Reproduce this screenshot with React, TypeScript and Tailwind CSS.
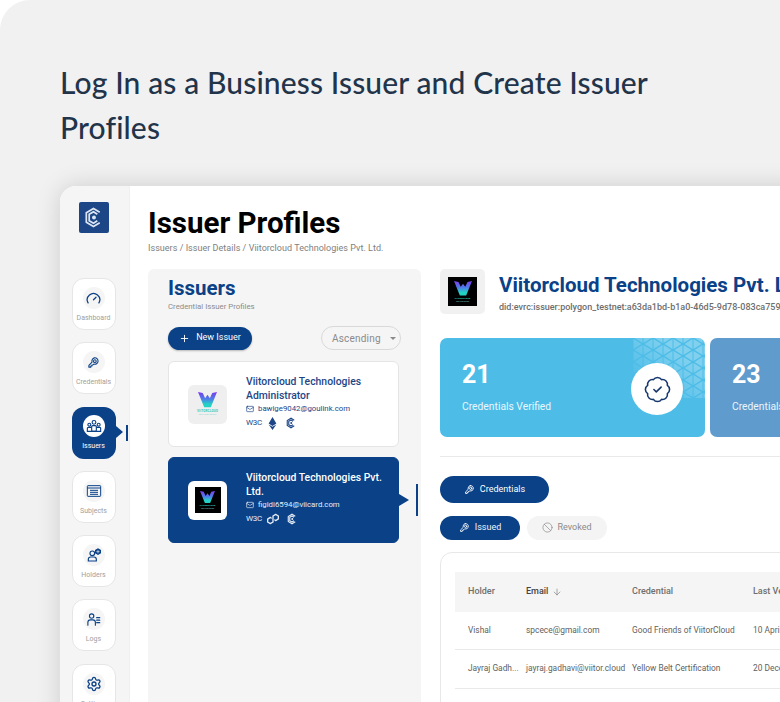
import { ArrowDown, Ban, BadgeCheck, Gauge, Mail, Plus, Settings } from 'lucide-react';
import { FaEthereum } from 'react-icons/fa';
import { SiPolygon } from 'react-icons/si';
import type { ReactNode } from 'react';

const ROBOTO = "font-['Roboto',sans-serif]";

function CredIcon({ className }: { className?: string }) {
  return (
    <svg viewBox="0 0 24 24" fill="none" stroke="currentColor" strokeWidth="2" strokeLinejoin="round" strokeLinecap="round" className={className}>
      <path d="M13.5 3.5c3.7-.8 7.4 2.7 6.9 6.6-.5 3.600-4.200 5.900-7.700 4.800l-1.700 1.700h-2v2H7v2H3.500v-3.400l5.800-5.700c-1-3.300.9-7.200 4.200-8z" />
      <circle cx="14.500" cy="9.500" r="2.500" />
    </svg>
  );
}

function SubjectsIcon({ className }: { className?: string }) {
  return (
    <svg viewBox="0 0 24 24" fill="none" stroke="currentColor" strokeWidth="1.500" className={className}>
      <rect x="2" y="4" width="20" height="16" rx="1" />
      <path d="M2 7.500h20M6 11h12M6 14h12M6 17h12" />
    </svg>
  );
}

function HoldersIcon({ className }: { className?: string }) {
  return (
    <svg viewBox="0 0 24 24" fill="none" stroke="currentColor" strokeWidth="1.800" className={className}>
      <circle cx="9.500" cy="9.500" r="3.500" />
      <path d="M3.500 21v-2.500c0-2 1.500-3.500 3.500-3.500h5c2 0 3.500 1.500 3.500 3.500V21z" />
      <path fill="currentColor" stroke="none" d="M18 2l4.500 2.500v5L18 12l-4.500-2.500v-5z" />
      <path stroke="#f5f5f5" strokeWidth="1" d="M18 4.500v5M15.500 7h5" />
    </svg>
  );
}

function LogsIcon({ className }: { className?: string }) {
  return (
    <svg viewBox="0 0 24 24" fill="none" stroke="currentColor" strokeWidth="1.800" strokeLinecap="round" className={className}>
      <circle cx="9" cy="6.500" r="3.500" />
      <path d="M3 21v-4.500C3 14 5 12.500 7 12.500h4c2 0 4 1.500 4 4V21" />
      <path d="M17 9h5M17 13h5M17 17h5" />
    </svg>
  );
}

function IssuersIcon({ className }: { className?: string }) {
  return (
    <svg viewBox="0 0 24 24" fill="none" stroke="currentColor" strokeWidth="1.700" className={className}>
      <circle cx="12" cy="6.500" r="2.800" />
      <circle cx="5" cy="10" r="2.200" />
      <circle cx="19" cy="10" r="2.200" />
      <rect x="8.500" y="11.500" width="7" height="8.500" rx="1.500" />
      <path d="M8.500 14H3.500C2.500 14 2 14.800 2 15.800V20h20v-4.200c0-1-.5-1.800-1.500-1.800h-5" />
    </svg>
  );
}

function BrandMark({ className, strokeWidth = 1.800 }: { className?: string; strokeWidth?: number }) {
  return (
    <svg viewBox="0 0 24 24" fill="none" stroke="currentColor" strokeWidth={strokeWidth} className={className}>
      <path d="M18.500 6.500L12 2.500 4.500 7v10l7.500 4.500 6.500-4" />
      <path d="M16 8.500L12 6 7.500 8.700v6.600L12 18l4-2.500" />
      <circle cx="12.500" cy="12" r="2" fill="currentColor" stroke="none" />
    </svg>
  );
}

function ViitorLogo({ width, tiny }: { width: number; tiny?: boolean }) {
  return (
    <div className="flex flex-col items-center">
      <svg viewBox="0 0 40 32" style={{ width }}>
        <defs>
          <linearGradient id="vg" x1="0" y1="0" x2="0" y2="1">
            <stop offset="0" stopColor="#7c3aed" />
            <stop offset="0.45" stopColor="#4f7be8" />
            <stop offset="0.8" stopColor="#22d3c5" />
          </linearGradient>
        </defs>
        <path fill="url(#vg)" d="M0 0l10 2 5 11 5-7 5 7 5-11 10-2-13 32h-14z" />
      </svg>
      <span className={`mt-[1px] font-bold whitespace-nowrap text-[#2fc9bb] ${tiny ? 'text-[2.500px] leading-[3px]' : 'text-[3px] leading-[4px] tracking-[0.2px]'}`}>
        VIITORCLOUD
      </span>
      <span className={`whitespace-nowrap text-[#7fcfc6] ${tiny ? 'text-[1.800px] leading-[2px]' : 'text-[2px] leading-[3px] tracking-[0.3px]'}`}>
        TECHNOLOGIES
      </span>
    </div>
  );
}

interface NavItem {
  label: string;
  icon: ReactNode;
  active?: boolean;
}

const NAV: NavItem[] = [
  { label: 'Dashboard', icon: <Gauge className="w-[15px] h-[15px]" /> },
  { label: 'Credentials', icon: <CredIcon className="w-[13px] h-[13px]" /> },
  { label: 'Issuers', icon: <IssuersIcon className="w-[16px] h-[16px]" />, active: true },
  { label: 'Subjects', icon: <SubjectsIcon className="w-[16px] h-[16px]" /> },
  { label: 'Holders', icon: <HoldersIcon className="w-[16px] h-[16px]" /> },
  { label: 'Logs', icon: <LogsIcon className="w-[15px] h-[15px]" /> },
  { label: 'Settings', icon: <Settings className="w-[16px] h-[16px]" /> },
];

function Sidebar() {
  return (
    <aside className="w-[70px] shrink-0 bg-[#f5f5f5] flex flex-col items-center pt-4 pr-[2px] border-r border-[#f0f0f0]">
      <div className="w-[30px] h-[31px] rounded-[2px] bg-[#1d4687] flex items-center justify-center text-[#dbe4f2]">
        <BrandMark className="w-[23px] h-[23px]" />
      </div>
      <div className="mt-[45px] flex flex-col gap-[12.300px]">
        {NAV.map((item) => (
          <div
            key={item.label}
            className={`relative w-[44px] h-[52px] rounded-[12px] flex flex-col items-center pt-2 ${
              item.active ? 'bg-[#0a4187]' : 'bg-white border border-[#e6e6e6]'
            }`}
          >
            <div className={`w-[22px] h-[22px] rounded-full flex items-center justify-center ${item.active ? 'bg-white text-[#0a4187]' : 'bg-[#f5f5f5] text-[#0a4187]'}`}>
              {item.icon}
            </div>
            <span className={`mt-[4px] text-[7px] leading-[10px] ${item.active ? 'text-white' : 'text-[#a0a0a0]'}`}>{item.label}</span>
            {item.active && (
              <>
                <span className="absolute left-[44px] top-[19px] w-0 h-0 border-y-[6px] border-y-transparent border-l-[7px] border-l-[#0a4187]" />
                <span className="absolute left-[54px] top-[18px] w-[2px] h-[16px] bg-[#0a4187]" />
              </>
            )}
          </div>
        ))}
      </div>
    </aside>
  );
}

interface IssuerCardProps {
  name: string;
  email: string;
  selected?: boolean;
  chain: ReactNode;
}

function IssuerCard({ name, email, selected, chain }: IssuerCardProps) {
  const sub = selected ? 'text-[#e6edf7]' : 'text-[#1d4687]';
  return (
    <div
      className={`relative h-[86px] w-[231px] rounded-[6px] flex items-center pl-[19px] border ${
        selected ? 'bg-[#0a4187] border-[#0a4187]' : 'bg-white border-[#e5e5e5]'
      }`}
    >
      <div className={`w-[39px] h-[39px] shrink-0 rounded-[6px] flex items-center justify-center ${selected ? 'bg-white' : 'bg-[#efefef]'}`}>
        {selected ? (
          <div className="w-[26px] h-[26px] bg-black flex items-center justify-center">
            <ViitorLogo width={15} tiny />
          </div>
        ) : (
          <ViitorLogo width={19} />
        )}
      </div>
      <div className="ml-[19px] flex flex-col pb-[3px]">
        <div className={`text-[10.400px] leading-[14px] font-medium ${selected ? 'text-white' : 'text-[#1d4687]'}`}>{name}</div>
        <div className={`mt-[0.500px] flex items-center gap-[4px] text-[7.800px] leading-[12px] ${sub}`}>
          <Mail className="w-[8px] h-[8px]" />
          {email}
        </div>
        <div className={`mt-[1px] flex items-center gap-[7px] h-[14px] ${sub}`}>
          <span className="text-[8px] tracking-[-0.3px] w-[14px]">W3C</span>
          {chain}
          <BrandMark className="w-[12px] h-[12px]" strokeWidth={2.200} />
        </div>
      </div>
      {selected && (
        <>
          <span className="absolute left-[230px] top-[36px] w-0 h-0 border-y-[6px] border-y-transparent border-l-[10px] border-l-[#0a4187]" />
          <span className="absolute left-[247px] top-[26px] w-[2px] h-[32px] bg-[#0a4187]" />
        </>
      )}
    </div>
  );
}

function IssuersPanel() {
  return (
    <section className="w-[273px] shrink-0 bg-[#f5f5f5] rounded-t-[6px] pl-[20px] pt-[6px]">
      <h2 className="text-[20.500px] leading-[26px] font-bold text-[#0a4187]">Issuers</h2>
      <p className="mt-[1px] text-[7.800px] leading-[10px] text-[#8c8c8c]">Credential Issuer Profiles</p>
      <div className="mt-[14px] w-[233px] flex items-center justify-between">
        <button className="w-[84px] h-[23px] rounded-full bg-[#0a4187] text-white text-[9px] flex items-center justify-center gap-[6px] shadow-[0_1px_2px_rgba(0,0,0,0.25)]">
          <Plus className="w-[11px] h-[11px]" />
          New Issuer
        </button>
        <div className="w-[80px] h-[24px] rounded-full border border-[#d9d9d9] flex items-center pl-[10px] text-[10px] tracking-[0.2px] text-[#8a8a8a]">
          Ascending
          <span className="ml-[9px] w-0 h-0 border-x-[3px] border-x-transparent border-t-[3px] border-t-[#8a8a8a]" />
        </div>
      </div>
      <div className="mt-[11px] flex flex-col gap-[10px]">
        <IssuerCard
          name="Viitorcloud Technologies Administrator"
          email="bawige9042@goulink.com"
          chain={<FaEthereum className="w-[11px] h-[13px]" />}
        />
        <IssuerCard
          selected
          name="Viitorcloud Technologies Pvt. Ltd."
          email="figidi6594@viicard.com"
          chain={<SiPolygon className="w-[12px] h-[12px]" />}
        />
      </div>
    </section>
  );
}

function TrianglePattern() {
  return (
    <svg className="absolute right-0 top-0 w-[72px] h-[60px]" viewBox="0 0 72 60">
      <defs>
        <pattern id="tri" width="20" height="12" patternUnits="userSpaceOnUse">
          <path d="M0.500 1v10l8-5zM9.500 7v10l-8-5zM9.500-5V5l-8-5zM10.500 7v10l8-5zM10.500-5V5l8-5zM19.500 1v10l-8-5z" fill="#ffffff" />
        </pattern>
        <linearGradient id="fade" x1="1" y1="0" x2="0" y2="1">
          <stop offset="0.3" stopColor="#4a4a4a" />
          <stop offset="0.85" stopColor="#000" />
        </linearGradient>
        <mask id="m">
          <rect width="72" height="60" fill="url(#fade)" />
        </mask>
      </defs>
      <rect width="72" height="60" fill="url(#tri)" mask="url(#m)" />
    </svg>
  );
}

function StatCard({ value, label, children, wide }: { value: string; label: string; children?: ReactNode; wide?: boolean }) {
  return (
    <div className={`relative h-[99px] shrink-0 rounded-[7px] text-white pl-[22px] pt-[21px] overflow-hidden ${wide ? 'w-[265px] bg-[#4dbde8]' : 'w-[200px] bg-[#5f9bcd]'}`}>
      <div className="text-[25px] leading-[32px] font-bold">{value}</div>
      <div className="mt-[9px] text-[10.300px] leading-[14px] text-[#eaf6fc]">{label}</div>
      {children}
    </div>
  );
}

const ROWS = [
  { holder: 'Vishal', email: 'spcece@gmail.com', credential: 'Good Friends of ViitorCloud', date: '10 April 2024' },
  { holder: 'Jayraj Gadh...', email: 'jayraj.gadhavi@viitor.cloud', credential: 'Yellow Belt Certification', date: '20 December 2023' },
];

function DetailPanel() {
  return (
    <section className="ml-[19px] w-[460px] shrink-0">
      <div className="flex items-center h-[45px]">
        <div className="w-[45px] h-[45px] rounded-[5px] bg-[#f1f1f1] flex items-center justify-center">
          <div className="w-[29px] h-[29px] bg-black flex items-center justify-center">
            <ViitorLogo width={18} tiny />
          </div>
        </div>
        <div className="ml-[14px] whitespace-nowrap">
          <div className="text-[20.500px] leading-[28px] font-bold text-[#0a4187]">Viitorcloud Technologies Pvt. Ltd.</div>
          <div className="mt-[3px] text-[9px] leading-[11px] font-medium text-[#6e6e6e]">did:evrc:issuer:polygon_testnet:a63da1bd-b1a0-46d5-9d78-083ca759</div>
        </div>
      </div>
      <div className="mt-[24px] flex gap-[5px]">
        <StatCard value="21" label="Credentials Verified" wide>
          <TrianglePattern />
          <div className="absolute left-[191px] top-[25px] w-[52px] h-[52px] rounded-full bg-white flex items-center justify-center text-[#17386f]">
            <BadgeCheck className="w-[29px] h-[29px]" strokeWidth={1.300} />
          </div>
        </StatCard>
        <StatCard value="23" label="Credentials Issued" />
      </div>
      <div className="mt-[19px] h-px bg-[#e9e9e9]" />
      <button className="mt-[19px] w-[109px] h-[27px] rounded-full bg-[#0a4187] text-white text-[9px] flex items-center justify-center gap-[5px]">
        <CredIcon className="w-[11px] h-[11px]" />
        Credentials
      </button>
      <div className="mt-[12.500px] flex gap-[7px]">
        <button className="w-[80px] h-[24px] rounded-full bg-[#0a4187] text-[#eef3fa] text-[9px] flex items-center justify-center gap-[5px]">
          <CredIcon className="w-[11px] h-[11px]" />
          Issued
        </button>
        <button className="w-[80px] h-[24px] rounded-full bg-[#f4f4f4] text-[#8a8a8a] text-[9px] flex items-center justify-center gap-[4px]">
          <Ban className="w-[11px] h-[11px]" strokeWidth={1.500} />
          Revoked
        </button>
      </div>
      <div className="mt-[12px] h-[200px] border border-[#e8e8e8] rounded-tl-[12px] pl-[14px] pt-[19px]">
        <div className="grid grid-cols-[58px_106px_121px_1fr] h-[40px] items-center bg-[#f5f5f5] pl-[13px] text-[9px] font-medium text-[#6f6f6f]">
          <div>Holder</div>
          <div className="flex items-center gap-[4px] text-[#444444]">
            Email <ArrowDown className="w-[10px] h-[10px] text-[#777777]" strokeWidth={1.500} />
          </div>
          <div>Credential</div>
          <div>Last Verified</div>
        </div>
        {ROWS.map((r) => (
          <div key={r.email} className="grid grid-cols-[58px_106px_121px_1fr] h-[38.500px] items-center pl-[13px] text-[8.400px] text-[#5f5f5f] border-b border-[#e9e9e9] whitespace-nowrap">
            <div>{r.holder}</div>
            <div>{r.email}</div>
            <div>{r.credential}</div>
            <div>{r.date}</div>
          </div>
        ))}
      </div>
    </section>
  );
}

export default function App() {
  return (
    <div className="w-[780px] h-[702px] overflow-hidden bg-white">
      <div className="w-[780px] h-[702px] overflow-hidden rounded-tl-[30px] bg-[#f1f1f2] pl-[60px] pt-[60px]">
        <h1 className="w-[640px] text-[30px] leading-[45px] font-medium tracking-[0.13px] font-['Lato',sans-serif] text-[#22344a]">
          Log In as a Business Issuer and Create Issuer Profiles
        </h1>
        <div className={`mt-[36px] w-[900px] h-[560px] flex rounded-tl-[16px] overflow-hidden bg-white shadow-[0_0_24px_rgba(0,0,0,0.15)] ${ROBOTO}`}>
          <Sidebar />
          <main className="flex-1 pl-[18px] pt-[17px]">
            <div className="text-[29.500px] leading-[40px] font-bold text-black">Issuer Profiles</div>
            <div className="text-[9px] leading-[12px] tracking-[0.03px] text-[#808080] mt-[-1px]">Issuers / Issuer Details / Viitorcloud Technologies Pvt. Ltd.</div>
            <div className="mt-[15px] flex">
              <IssuersPanel />
              <DetailPanel />
            </div>
          </main>
        </div>
      </div>
    </div>
  );
}
